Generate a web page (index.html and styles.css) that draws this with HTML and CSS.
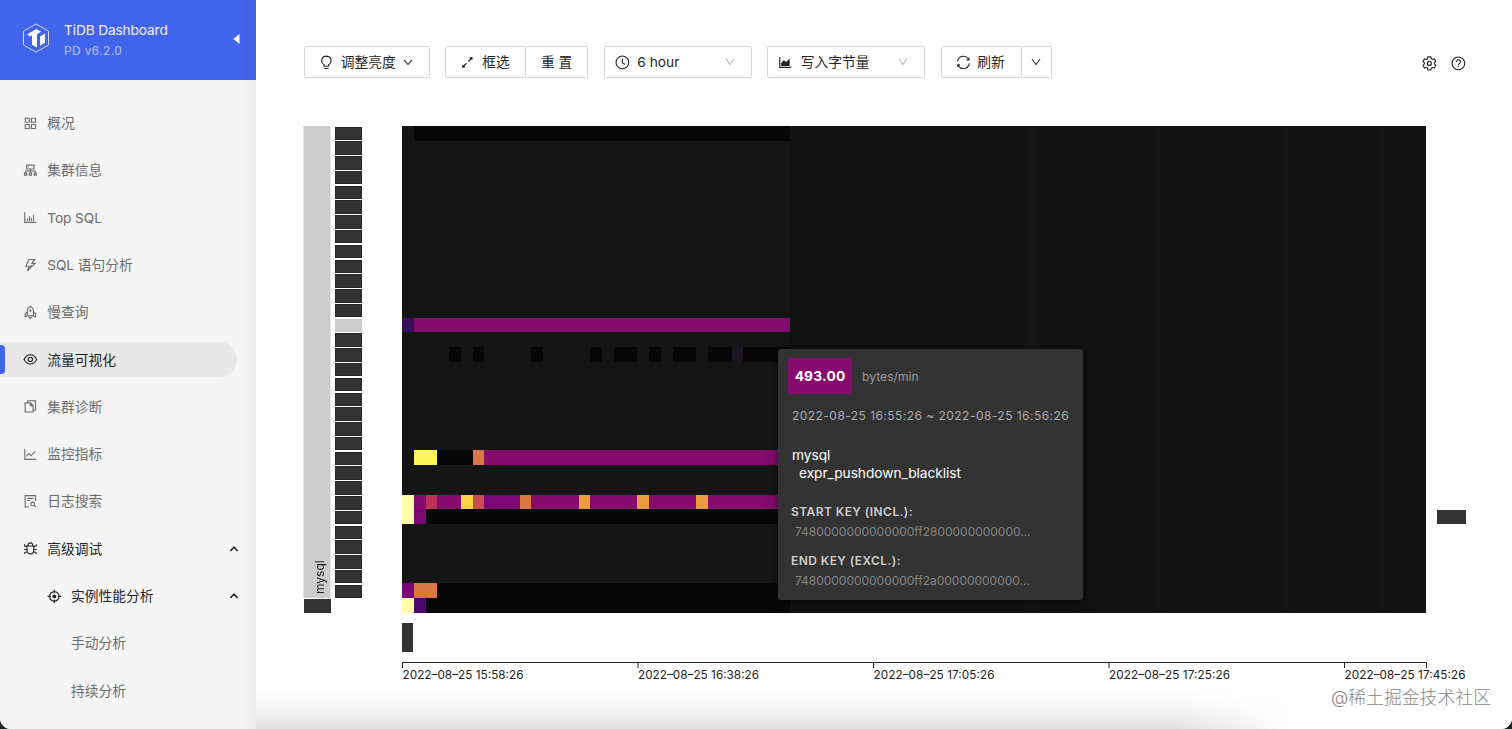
FILE: index.html
```html
<!DOCTYPE html>
<html lang="zh-CN">
<head>
<meta charset="utf-8">
<title>TiDB Dashboard</title>
<link rel="stylesheet" href="styles.css">
</head>
<body>
<div class="window">
<aside class="sidebar">
  <header class="brand">
    <svg class="logo" viewBox="0 0 28 30"><path d="M14 1 26.500 8v14L14 29 1.500 22V8z" fill="none" stroke="#cfdcff" stroke-width="1"/><path d="M5.500 11.300 14.300 6 19 8.700 15 11.200v13.300L10 21.700v-9.400L7.800 13.600zM18 13.500 23 10.600v9.200L18 22.700z" fill="#fff"/></svg>
    <div class="brand-text"><div class="brand-name">TiDB Dashboard</div><div class="brand-version">PD v6.2.0</div></div>
    <svg class="collapse" viewBox="0 0 7 10"><path d="M6.500 0v10L.3 5z"/></svg>
  </header>
  <nav class="menu">
    <a class="item"><svg class="icon" viewBox="0 0 1024 1024"><path d="M156 156h282v282H156zM586 156h282v282H586zM156 586h282v282H156zM586 586h282v282H586z"/></svg><span class="label">概况</span></a>
    <a class="item"><svg class="icon" viewBox="0 0 1024 1024"><path d="M256 146h512v270H256zM512 416v280M180 696V556h664v140M104 700h150v150H104zM437 700h150v150H437zM770 700h150v150H770zM360 280h60"/></svg><span class="label">集群信息</span></a>
    <a class="item"><svg class="icon" viewBox="0 0 1024 1024"><path d="M124 150v710h800M306 770V590M446 770V430M586 770V530M730 770V330"/></svg><span class="latin">Top SQL</span></a>
    <a class="item"><svg class="icon" viewBox="0 0 1024 1024"><path d="M420 100h400L620 370h220L310 900l100-330H190z"/><path d="M600 500 430 680"/></svg><span class="latin sql">SQL </span><span class="label">语句分析</span></a>
    <a class="item"><svg class="icon" viewBox="0 0 1024 1024"><path d="M300 750V350Q330 200 512 90q182 110 212 260v400zM300 490 150 610v210l150-70M724 490l150 120v210l-150-70M390 760q0 100 122 170 122-70 122-170"/><circle cx="512" cy="400" r="42"/></svg><span class="label">慢查询</span></a>
    <a class="item active"><svg class="icon" viewBox="0 0 1024 1024"><path d="M70 512Q230 190 512 190T954 512Q794 834 512 834T70 512z"/><circle cx="512" cy="512" r="145"/></svg><span class="label">流量可视化</span></a>
    <a class="item"><svg class="icon" viewBox="0 0 1024 1024"><path d="M150 270h370l180 180v450H150zM330 270V120h540v660H700M510 290v180h170"/></svg><span class="label">集群诊断</span></a>
    <a class="item"><svg class="icon" viewBox="0 0 1024 1024"><path d="M124 140v720h800M240 650 400 460l150 140L850 300"/></svg><span class="label">监控指标</span></a>
    <a class="item"><svg class="icon" viewBox="0 0 1024 1024"><path d="M430 900H150V110h720v380M290 300h440M290 450h210"/><circle cx="670" cy="690" r="130"/><path d="m765 785 120 120"/></svg><span class="label">日志搜索</span></a>
    <a class="item open"><svg class="icon" viewBox="0 0 1024 1024"><path d="M280 350h464v300q0 250-232 250T280 650zM340 340q0-210 172-210t172 210M280 390 110 350V230M744 390l170-40V230M70 590h210M744 590h210M290 740 120 800v100M734 740l170 60v100"/></svg><span class="label">高级调试</span><svg class="arrow" viewBox="0 0 10 10"><path d="m1.300 7 3.700-3.800L8.700 7"/></svg></a>
    <a class="item open nested"><svg class="icon" viewBox="0 0 1024 1024"><circle cx="512" cy="512" r="330"/><path d="M512 40v230M512 754v230M40 512h230M754 512h230"/><circle class="solid" cx="512" cy="512" r="135"/></svg><span class="label">实例性能分析</span><svg class="arrow" viewBox="0 0 10 10"><path d="m1.300 7 3.700-3.800L8.700 7"/></svg></a>
    <a class="item leaf"><span class="label">手动分析</span></a>
    <a class="item leaf"><span class="label">持续分析</span></a>
  </nav>
</aside>
<main class="content">
  <div class="toolbar">
    <div class="control brightness"><svg class="icon" viewBox="0 0 1024 1024"><path d="M360 780v-90Q180 590 180 400 200 90 512 80q312 10 332 320 0 190-180 290v90zM370 940h284"/></svg><span class="label">调整亮度</span><svg class="down" viewBox="0 0 10 10"><path d="m1 2.800 4 4.700 4-4.700"/></svg></div>
    <div class="group">
      <div class="control select-box"><svg class="icon" viewBox="0 0 1024 1024"><path d="M230 794 450 574M574 450 794 230"/><path class="solid" d="M650 150l224-10-10 224-70-70-60 60-74-74 60-60zM374 874l-224 10 10-224 70 70 60-60 74 74-60 60z"/></svg><span class="label">框选</span></div>
      <div class="control reset"><span class="label">重 置</span></div>
    </div>
    <div class="control hours"><svg class="icon" viewBox="0 0 1024 1024"><circle cx="512" cy="512" r="440"/><path d="M512 240v300l170 120"/></svg><span class="latin">6 hour</span><svg class="down pale" viewBox="0 0 10 10"><path d="m1 1.500 4 6 4-6"/></svg></div>
    <div class="control metric"><svg class="icon" viewBox="0 0 1024 1024"><path d="M124 140v720h800"/><path class="solid" d="M220 770V560l190-220 150 140 250-230v520z"/></svg><span class="label">写入字节量</span><svg class="down pale" viewBox="0 0 10 10"><path d="m1 1.500 4 6 4-6"/></svg></div>
    <div class="group">
      <div class="control refresh"><svg class="icon" viewBox="0 0 1024 1024"><path d="M90 450Q170 90 512 90q250 0 370 230M934 574Q854 934 512 934q-250 0-370-230M900 190v150H740M124 834V684h160"/></svg><span class="label">刷新</span></div>
      <div class="control more"><svg class="down" viewBox="0 0 10 10"><path d="m1 2 4 5.500L9 2"/></svg></div>
    </div>
    <div class="tools">
      <svg class="icon" viewBox="0 0 1024 1024"><path d="M410 62h204l35 130 75 43 130-35 102 177-95 96v88l95 96-102 177-130-35-75 43-35 130H410l-35-130-75-43-130 35L68 657l95-96v-88l-95-96 102-177 130 35 75-43z"/><circle cx="512" cy="515" r="140"/></svg>
      <svg class="icon" viewBox="0 0 1024 1024"><circle cx="512" cy="512" r="440"/><path d="M370 410Q380 270 512 270t142 130q0 80-90 130-52 30-52 100M512 690v75"/></svg>
    </div>
  </div>
  <section class="visualizer">
    <div class="schema"><div class="database">mysql</div><div class="database-rest"></div></div>
    <div class="tables"><i></i><i></i><i></i><i></i><i></i><i></i><i></i><i></i><i></i><i></i><i></i><i></i><i></i><i class="hover"></i><i></i><i></i><i></i><i></i><i></i><i></i><i></i><i></i><i></i><i></i><i></i><i></i><i></i><i></i><i></i><i></i><i></i><i></i></div>
    <div class="plot">
      <svg class="heatmap" viewBox="0 0 87 33" preserveAspectRatio="none" shape-rendering="crispEdges">
        <path fill="#151515" d="M0 0h87v33H0z"/>
        <path fill="#121212" d="M33 0h54v33H33z"/>
        <path fill="#141414" d="M53 0h1v33h-1zM64 0h1v33h-1zM75 0h1v33h-1zM83 0h1v33h-1z"/>
        <path fill="#070707" d="M1 0h32v1H1zM4 15h1v1H4zM6 15h1v1H6zM11 15h1v1h-1zM16 15h1v1h-1zM18 15h2v1h-2zM21 15h1v1h-1zM23 15h2v1h-2zM26 15h2v1h-2zM29 15h4v1h-4zM3 22h3v1H3zM2 26h31v1H2zM3 31h30v1H3zM2 32h31v1H2z"/>
        <path fill="#1c1621" d="M28 15h1v1h-1z"/>
        <path fill="#390e5b" d="M0 13h1v1H0z"/>
        <path fill="#850b6d" d="M1 13h32v1H1zM7 22h26v1H7zM1 25h32v1H1z"/>
        <path fill="#7b0675" d="M1 26h1v1H1zM7 25h3v1H7zM0 31h1v1H0z"/>
        <path fill="#fff65a" d="M1 22h2v1H1z"/>
        <path fill="#db7645" d="M6 22h1v1H6zM10 25h1v1h-1zM1 31h2v1H1z"/>
        <path fill="#ffffaa" d="M0 25h1v2H0zM0 32h1v1H0z"/>
        <path fill="#bb3157" d="M2 25h1v1H2z"/>
        <path fill="#fed142" d="M5 25h1v1H5z"/>
        <path fill="#c94d4e" d="M6 25h1v1H6z"/>
        <path fill="#ec9c3e" d="M15 25h1v1h-1zM20 25h1v1h-1zM25 25h1v1h-1z"/>
        <path fill="#4a0870" d="M1 32h1v1H1z"/>
      </svg>
      <div class="time-marker"></div>
      <svg class="axis" viewBox="0 0 1080 24">
        <path d="M.5 6V.5h1024V6M236 .5V6M471.500.5V6M707 .5V6M942.500.5V6"/>
        <text x=".5" y="17" textLength="121">2022–08–25 15:58:26</text>
        <text x="236" y="17" textLength="121">2022–08–25 16:38:26</text>
        <text x="471.500" y="17" textLength="121">2022–08–25 17:05:26</text>
        <text x="707" y="17" textLength="121">2022–08–25 17:25:26</text>
        <text x="942.500" y="17" textLength="121">2022–08–25 17:45:26</text>
      </svg>
    </div>
    <div class="key-marker"></div>
  </section>
  <div class="tooltip">
    <div class="tip-head"><b class="tip-value">493.00</b><span class="tip-unit">bytes/min</span></div>
    <div class="tip-time">2022-08-25 16:55:26 ~ 2022-08-25 16:56:26</div>
    <div class="tip-path"><div>mysql</div><div class="tip-table">expr_pushdown_blacklist</div></div>
    <div class="tip-label">START KEY (INCL.):</div><div class="tip-key start">7480000000000000ff2800000000000...</div>
    <div class="tip-label">END KEY (EXCL.):</div><div class="tip-key end">7480000000000000ff2a00000000000...</div>
  </div>
  <div class="watermark">@稀土掘金技术社区</div>
</main>
</div>
</body>
</html>
```
FILE: styles.css
```css
* { box-sizing: border-box; }
body { margin: 0; background: #202522; font-family: Inter, "Noto Sans CJK SC", sans-serif; font-size: 13.75px; color: #262626; overflow: hidden; }
.window { display: flex; width: 1512px; height: 729px; border-radius: 0 0 11px 11px; overflow: hidden; background: #fff; }
.icon { width: 14.750px; height: 14.750px; flex: none; fill: none; stroke: currentColor; stroke-width: 78; overflow: visible; }
.icon .solid { fill: currentColor; stroke: none; }
.label { margin-top: -2px; }

.sidebar { width: 256px; flex: none; background: linear-gradient(90deg, #f5f5f5 240px, #f0f0f0 250px, #e8e8e8 256px); }
.brand { height: 80px; display: flex; align-items: flex-start; padding: 0 16px 0 22px; background: linear-gradient(90deg, #4263eb 240px, #405fe0 256px); color: #fff; }
.logo { width: 28px; height: 30px; margin-top: 23px; }
.brand-text { margin-left: 14px; padding-top: 20px; flex: 1; }
.brand-name { font-size: 13.75px; line-height: 20px; color: #edf1ff; letter-spacing: -.16px; }
.brand-version { font-size: 12px; line-height: 21px; color: #b3c3fa; letter-spacing: .35px; }
.collapse { width: 7px; height: 10px; margin-top: 34px; fill: #fff; }
.menu { padding-top: 19.400px; }
.item { position: relative; display: flex; align-items: center; height: 47.300px; padding: 0 17px 0 23.250px; color: #6c6c6c; white-space: pre; }
.item .icon { margin-right: 9.250px; }
.item.active { height: 35px; margin: 6.150px 19px 6.150px 0; background: #e8e8e8; border-radius: 0 18px 18px 0; color: #1b1b1b; }
.item.active::before { content: ""; position: absolute; left: 0; top: 3px; width: 5px; height: 29px; border-radius: 0 4px 4px 0; background: #4263eb; }
.item.open { color: #262626; }
.item.nested { padding-left: 47px; }
.item.leaf { padding-left: 71px; }
.arrow { width: 10px; height: 10px; margin-left: auto; fill: none; stroke: #222; stroke-width: 1.500; }
.item .latin { letter-spacing: -.12px; }

.content { position: relative; flex: 1; background: #fff; }
.content::after { content: ""; position: absolute; left: 0; bottom: 0; width: 1040px; height: 38px; background: linear-gradient(rgba(0,0,0,0), rgba(0,0,0,.035) 45%, rgba(0,0,0,.12)); -webkit-mask-image: linear-gradient(90deg, #000 920px, transparent 1035px); mask-image: linear-gradient(90deg, #000 920px, transparent 1035px); }
.toolbar { display: flex; align-items: center; gap: 15.500px; height: 32px; margin: 46px 0 0 47.600px; }
.group { display: flex; }
.control { display: flex; align-items: center; height: 32px; border: 1px solid #d9d9d9; border-radius: 2px; white-space: pre; }
.group .control + .control { border-left: 0; }
.down { width: 10px; height: 10px; fill: none; stroke: #333; stroke-width: 1.100; }
.down.pale { stroke: #b8b8b8; margin-left: auto; }
.brightness { width: 126px; padding-left: 14px; gap: 7.500px; }
.select-box { width: 81px; padding-left: 14px; gap: 7.500px; }
.reset { width: 62px; justify-content: center; }
.hours { width: 148px; padding: 0 16px 0 10px; gap: 8px; }
.metric { width: 158px; padding: 0 16px 0 10px; gap: 8px; }
.refresh { width: 81px; padding-left: 14px; gap: 7px; }
.more { width: 30px; justify-content: center; }
.tools { display: flex; gap: 15px; margin: 2px 46px 0 auto; }

.visualizer { display: flex; align-items: flex-start; margin: 48px 0 0 48px; }
.schema { width: 26.500px; }
.database { width: 26.500px; height: 472px; background: #ccc; writing-mode: vertical-rl; transform: rotate(180deg); font-size: 12px; line-height: 32px; padding: 4px 0 0 0; }
.database-rest { height: 13.500px; margin-top: 1px; background: #333; }
.tables { width: 27px; height: 471.500px; margin: .5px 0 0 4.500px; display: flex; flex-direction: column; gap: 1.300px; }
.tables i { flex: 1; background: #333; box-shadow: inset 0 0 0 1px #262626; }
.tables i.hover { background: #ccc; box-shadow: none; }
.plot { width: 1024px; margin-left: 40px; }
.heatmap { display: block; width: 1024px; height: 486.500px; }
.time-marker { width: 11px; height: 29px; margin-top: 10.500px; background: #333; }
.axis { display: block; width: 1080px; height: 24px; margin-top: 10px; overflow: visible; font-size: 11.750px; }
.axis path { fill: none; stroke: #222; }
.axis text { fill: #222; }
.key-marker { width: 29px; height: 14px; margin: 384px 0 0 11px; background: #333; }

.tooltip { position: absolute; left: 522px; top: 349px; width: 305px; height: 251px; padding: 9px 10px; background: #333; border-radius: 3px; box-shadow: 0 3px 12px rgba(0,0,0,.5); }
.tip-head { display: flex; align-items: center; }
.tip-value { width: 64px; height: 36px; line-height: 36px; text-align: center; background: #850b6d; color: #fff; font-size: 13.750px; border-radius: 2px; letter-spacing: .2px; }
.tip-unit { margin-left: 10px; font-size: 12px; color: #999; letter-spacing: .08px; }
.tip-time { margin: 13px 0 0 4px; font-size: 12px; line-height: 18px; color: #aaa; letter-spacing: .46px; white-space: nowrap; }
.tip-path { margin: 21px 0 0 4px; line-height: 18px; color: #fff; font-size: 13.750px; letter-spacing: -.06px; }
.tip-table { margin-left: 7px; }
.tip-label { margin: 21px 0 0 3px; font-size: 12px; line-height: 18px; font-weight: 600; color: #ccc; letter-spacing: .43px; }
.tip-key { margin: 2px 0 -10px 7px; font-size: 12px; line-height: 18px; color: #858585; letter-spacing: -.02px; }
.watermark { position: absolute; z-index: 2; right: 21px; top: 685px; line-height: 26px; font-size: 17.850px; font-weight: 300; color: #888; white-space: nowrap; }
```
